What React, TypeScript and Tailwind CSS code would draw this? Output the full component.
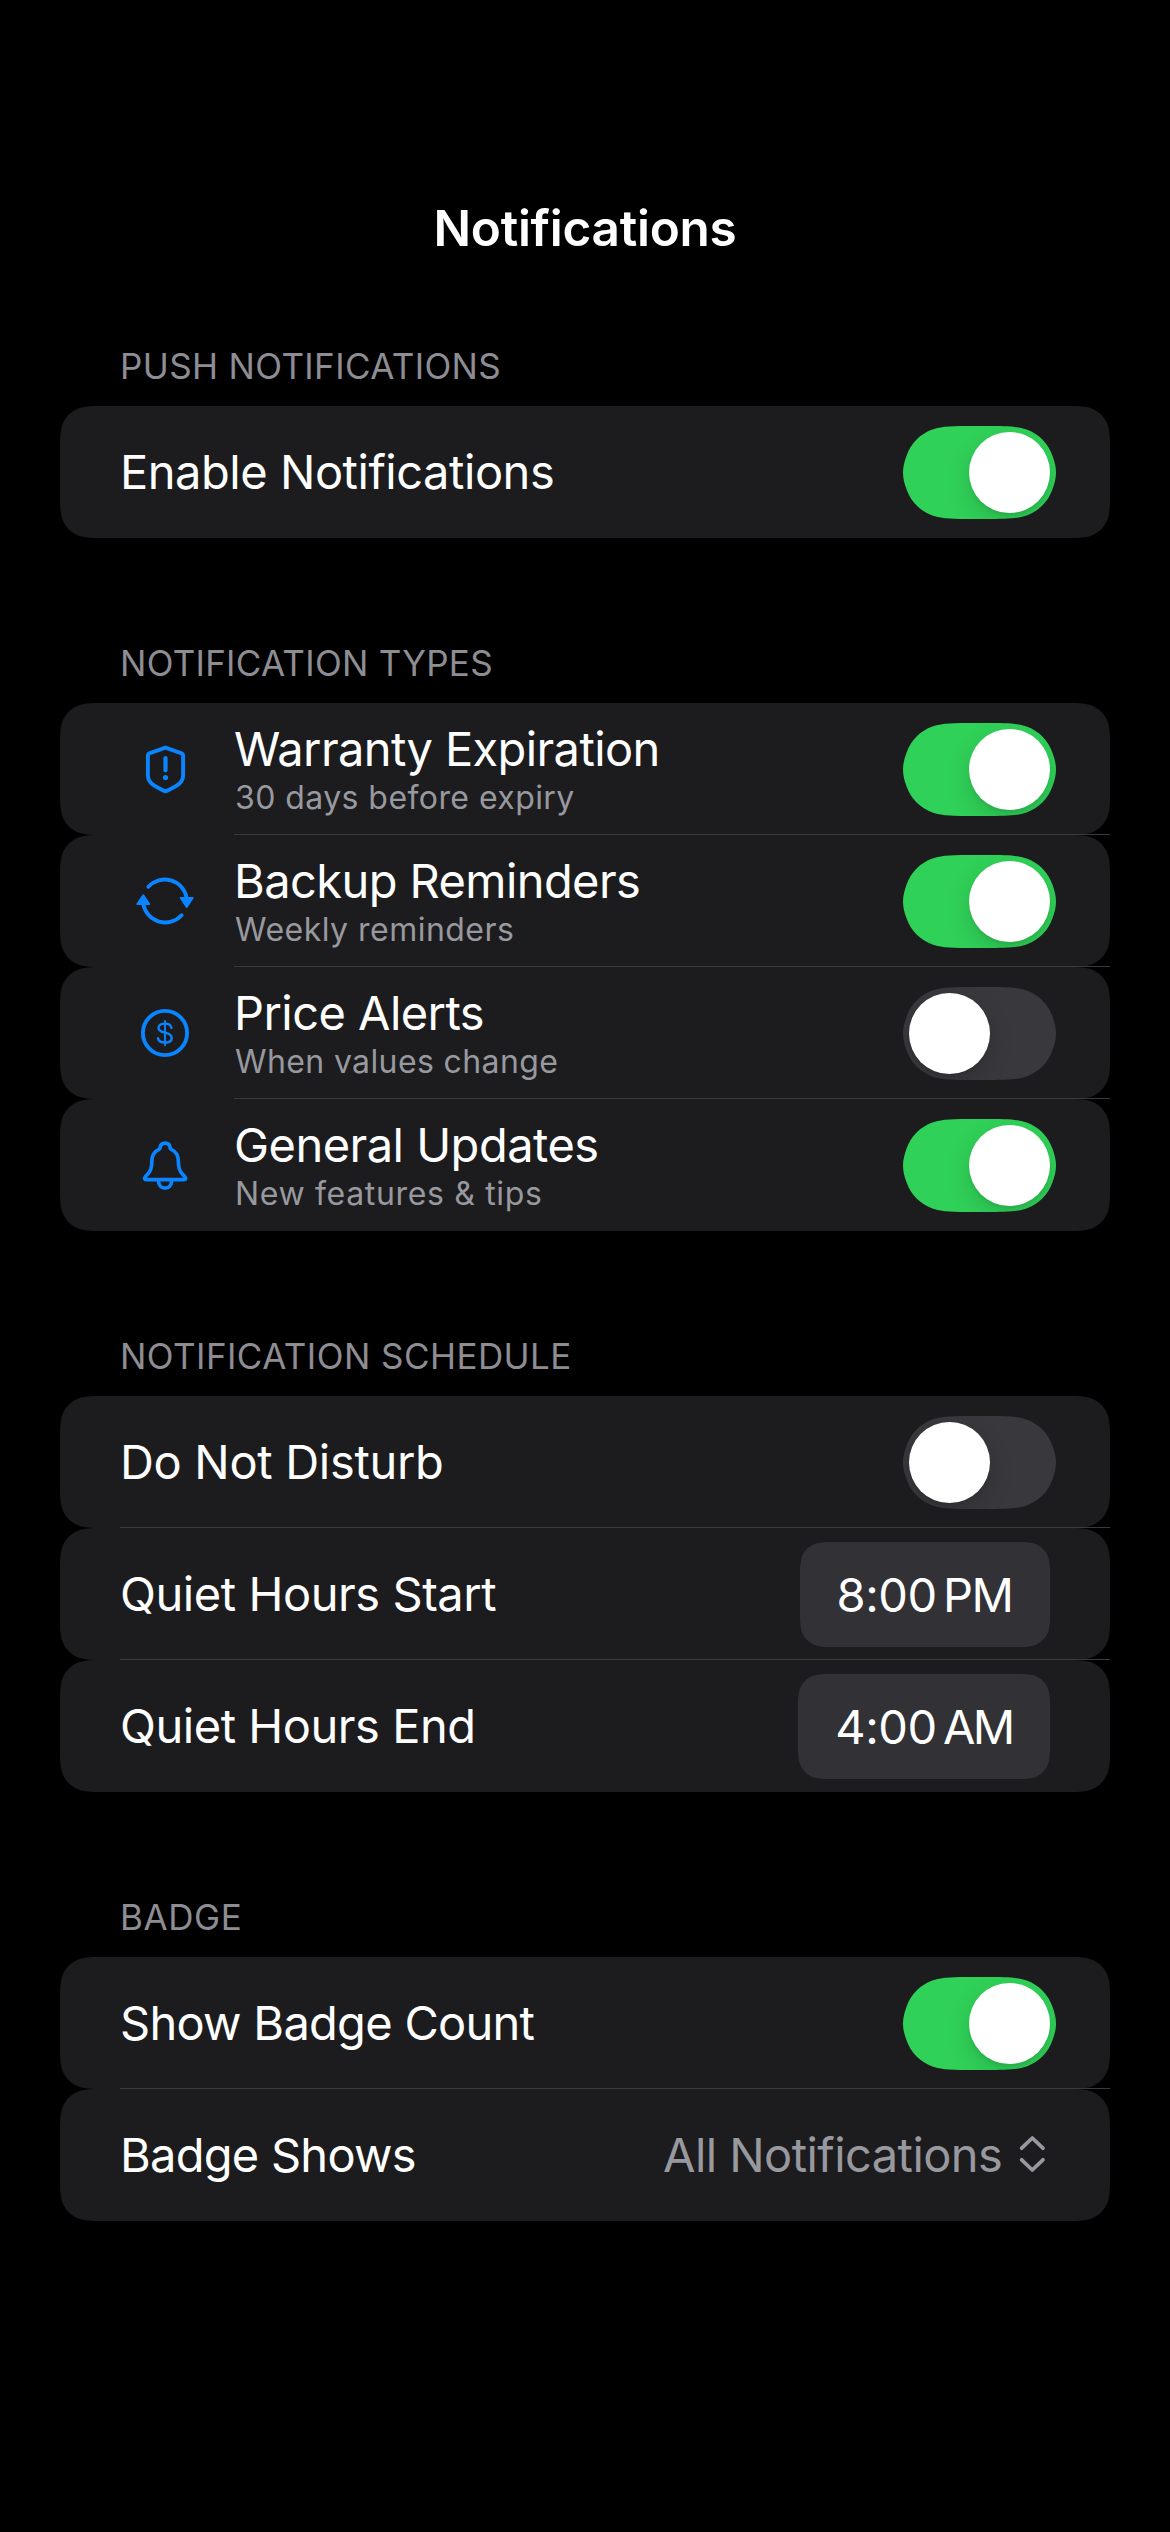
import React, { useState } from 'react';
import type { ReactNode } from 'react';

/** Rounded rectangle with continuous-curvature corners, as a CSS path. */
function smoothRect(w: number, h: number, r: number) {
  const a = 1.528665 * r;
  const b = 1.088493 * r;
  const c = 0.868407 * r;
  const d = 0.631494 * r;
  const e = 0.074911 * r;
  const f = 0.372824 * r;
  const g = 0.169059 * r;
  return (
    `path("M${a} 0 H${w - a} C${w - b} 0 ${w - c} 0 ${w - d} ${e} ` +
    `C${w - f} ${g} ${w - g} ${f} ${w - e} ${d} C${w} ${c} ${w} ${b} ${w} ${a} ` +
    `V${h - a} C${w} ${h - b} ${w} ${h - c} ${w - e} ${h - d} ` +
    `C${w - g} ${h - f} ${w - f} ${h - g} ${w - d} ${h - e} C${w - c} ${h} ${w - b} ${h} ${w - a} ${h} ` +
    `H${a} C${b} ${h} ${c} ${h} ${d} ${h - e} C${f} ${h - g} ${g} ${h - f} ${e} ${h - d} ` +
    `C0 ${h - c} 0 ${h - b} 0 ${h - a} V${a} C0 ${b} 0 ${c} ${e} ${d} ` +
    `C${g} ${f} ${f} ${g} ${d} ${e} C${c} 0 ${b} 0 ${a} 0 Z")`
  );
}

const TRACK =
  'path("M71 0 H82 C102.4 0 112.6 0 123.6 3.5 C135.7 7.9 145 17 149.4 29.4 C151.8 36 153 41 153 46.5 C153 52 151.8 57 149.4 63.6 C145 76 135.7 85.1 123.6 89.5 C112.6 93 102.4 93 82 93 H71 C50.6 93 40.4 93 29.4 89.5 C17.3 85.1 8 76 3.6 63.6 C1.2 57 0 52 0 46.5 C0 41 1.2 36 3.6 29.4 C8 17 17.3 7.9 29.4 3.5 C40.4 0 50.6 0 71 0 Z")';

function Toggle({ label, initial }: { label: string; initial: boolean }) {
  const [on, setOn] = useState(initial);
  return (
    <button
      type="button"
      role="switch"
      aria-checked={on}
      aria-label={label}
      onClick={() => setOn(!on)}
      style={{ clipPath: TRACK }}
      className={
        'mr-[54px] mt-px flex h-[93px] w-[153px] shrink-0 items-center px-1.5 ' +
        (on ? 'justify-end bg-[#30d158]' : 'justify-start bg-[#39393d]')
      }
    >
      <span className="size-[81px] rounded-full bg-white shadow-[0_9px_24px_rgba(0,0,0,0.15),0_3px_3px_rgba(0,0,0,0.06)]" />
    </button>
  );
}

function IconFrame({ children }: { children: ReactNode }) {
  return (
    <svg
      viewBox="0 0 60 60"
      className="ml-[75px] mr-[39px] size-[60px] shrink-0 text-[#0a84ff]"
      fill="none"
      stroke="currentColor"
      strokeWidth="3.9"
      strokeLinecap="round"
      strokeLinejoin="round"
    >
      {children}
    </svg>
  );
}

const ShieldIcon = () => (
  <IconFrame>
    <path d="M30.5 8.6 L14.3 14.3 Q12.9 14.9 12.9 16.4 V36.2 C12.9 41.2 15 43.8 19 46.4 Q22.5 48.8 30.5 52.4 Q38.5 48.8 42 46.4 C46 43.8 48.1 41.2 48.1 36.2 V16.4 Q48.1 14.9 46.7 14.3 Z" />
    <path d="M30.5 19.2 V31.3" strokeWidth="4.2" />
    <circle cx="30.5" cy="38.6" r="2.6" fill="currentColor" stroke="none" />
  </IconFrame>
);

const SyncIcon = () => (
  <IconFrame>
    <path d="M13.4 15.8 A22.2 22.2 0 0 1 51.7 27" />
    <path d="M46.6 44.2 A22.2 22.2 0 0 1 8.3 33" />
    <path d="M45.8 26.9 H57.6 L51.7 35.9 Z" fill="currentColor" strokeWidth="2" />
    <path d="M2.4 33.1 H14.2 L8.3 24.3 Z" fill="currentColor" strokeWidth="2" />
  </IconFrame>
);

const DollarIcon = () => (
  <IconFrame>
    <circle cx="30" cy="30" r="22.1" />
    <path d="M30 17.9 V42.2" strokeWidth="1.9" />
    <path
      d="M36.4 24.8 C36 22 33.5 20.6 30 20.6 C26.2 20.6 23.5 22.3 23.5 24.9 C23.5 27.7 26 28.7 30 29.6 C34.2 30.5 36.7 31.8 36.7 34.9 C36.7 37.9 33.8 39.5 30 39.5 C26 39.5 23.5 38 23 35.2"
      strokeWidth="2.4"
    />
  </IconFrame>
);

const BellIcon = () => (
  <IconFrame>
    <path
      d="M30.1 8.2 C27.2 8.2 25.4 10.2 25.1 12.6 C25 13.8 24.6 14.2 23.7 14.6 C19 16.6 17 20.6 16.9 26 C16.8 32.5 16.2 35.5 13.3 38.6 L10.5 41.6 C9 43.4 9.5 44.7 11.2 44.7 H49 C50.7 44.7 51.2 43.4 49.7 41.6 L46.9 38.6 C44 35.5 43.4 32.5 43.3 26 C43.2 20.6 41.2 16.6 36.5 14.6 C35.6 14.2 35.2 13.8 35.1 12.6 C34.8 10.2 33 8.2 30.1 8.2 Z"
      strokeWidth="3.7"
    />
    <path d="M23.5 45.5 C23.5 50 26.2 53.2 30.1 53.2 C34 53.2 36.7 50 36.7 45.5" strokeWidth="3.7" />
  </IconFrame>
);

function Section({ title, children }: { title: ReactNode; children: ReactNode }) {
  return (
    <section>
      <h2 className="mb-5 pl-[60px] text-[35px] leading-10 text-[#8d8d93]">{title}</h2>
      {children}
    </section>
  );
}

function Row({ children, divider = '' }: { children: ReactNode; divider?: string }) {
  return (
    <div className="relative h-[132px]">
      <div
        className="flex h-[132px] items-center bg-[#1c1c1e]"
        style={{ clipPath: smoothRect(1050, 132, 30) }}
      >
        {children}
      </div>
      {divider && <div className={'absolute right-0 bottom-0 h-px bg-[#3a3a3c] ' + divider} />}
    </div>
  );
}

function Label({ text, tracking }: { text: string; tracking: string }) {
  return <span className={'flex-1 pl-[60px] text-[47px] leading-[56px] ' + tracking}>{text}</span>;
}

function TypeRow(props: {
  icon: ReactNode;
  title: string;
  titleTracking: string;
  note: string;
  noteTracking: string;
  on: boolean;
  last?: boolean;
}) {
  return (
    <Row divider={props.last ? '' : 'left-[174px]'}>
      {props.icon}
      <div className="flex-1">
        <div className={'text-[47px] leading-[56px] ' + props.titleTracking}>{props.title}</div>
        <div className={'mt-px -mb-px pl-px text-[32px] leading-10 text-[#98989f] ' + props.noteTracking}>
          {props.note}
        </div>
      </div>
      <Toggle label={props.title} initial={props.on} />
    </Row>
  );
}

function TimePill({ width, pad, children }: { width: number; pad: string; children: ReactNode }) {
  return (
    <div
      className={'mr-[60px] mt-px flex h-[105px] items-center bg-[#323136] text-[47px] leading-[56px] ' + pad}
      style={{ width, clipPath: smoothRect(width, 105, 24) }}
    >
      {children}
    </div>
  );
}

export default function App() {
  return (
    <main className="min-h-[2532px] w-[1170px] bg-black px-[60px] pt-[198px] font-['Inter',sans-serif] text-white">
      <h1 className="mb-[88px] text-center text-[49.5px] leading-[60px] font-semibold tracking-[-0.27px]">
        Notifications
      </h1>
      <div className="flex flex-col gap-[105px]">
        <Section title={<span className="tracking-[0.37px]">PUSH NOTIFICATIONS</span>}>
          <Row>
            <Label text="Enable Notifications" tracking="tracking-[-0.465px]" />
            <Toggle label="Enable Notifications" initial />
          </Row>
        </Section>

        <Section title={<span className="tracking-[0.27px]">NOTIFICATION TYPES</span>}>
          <TypeRow
            icon={<ShieldIcon />}
            title="Warranty Expiration"
            titleTracking="tracking-[-0.62px]"
            note="30 days before expiry"
            noteTracking="tracking-[0.43px]"
            on
          />
          <TypeRow
            icon={<SyncIcon />}
            title="Backup Reminders"
            titleTracking="tracking-[-0.58px]"
            note="Weekly reminders"
            noteTracking="tracking-[0.48px]"
            on
          />
          <TypeRow
            icon={<DollarIcon />}
            title="Price Alerts"
            titleTracking="tracking-[-0.55px]"
            note="When values change"
            noteTracking="tracking-[0.38px]"
            on={false}
          />
          <TypeRow
            icon={<BellIcon />}
            title="General Updates"
            titleTracking="tracking-[-0.52px]"
            note="New features & tips"
            noteTracking="tracking-[0.66px]"
            on
            last
          />
        </Section>

        <Section title={<span className="tracking-[0.45px]">NOTIFICATION SCHEDULE</span>}>
          <Row divider="left-[60px]">
            <Label text="Do Not Disturb" tracking="tracking-[-0.32px]" />
            <Toggle label="Do Not Disturb" initial={false} />
          </Row>
          <Row divider="left-[60px]">
            <Label text="Quiet Hours Start" tracking="tracking-[-0.44px]" />
            <TimePill width={250} pad="pl-[36.6px] gap-[6.2px]">
              <span className="tracking-[-0.42px]">8:00</span>
              <span className="tracking-[-1.5px]">PM</span>
            </TimePill>
          </Row>
          <Row>
            <Label text="Quiet Hours End" tracking="tracking-[-0.46px]" />
            <TimePill width={252} pad="pl-[37.2px] gap-[6.2px]">
              <span className="tracking-[-0.42px]">4:00</span>
              <span className="tracking-[-2.6px]">AM</span>
            </TimePill>
          </Row>
        </Section>

        <Section title={<span className="tracking-[0.6px]">BADGE</span>}>
          <Row divider="left-[60px]">
            <Label text="Show Badge Count" tracking="tracking-[-0.72px]" />
            <Toggle label="Show Badge Count" initial />
          </Row>
          <Row>
            <Label text="Badge Shows" tracking="tracking-[-0.74px]" />
            <div className="mr-[65px] flex items-center gap-[16.7px] text-[#98989f]">
              <span className="text-[47px] leading-[56px] tracking-[-0.56px]">All Notifications</span>
              <svg
                viewBox="0 0 26 38"
                className="mb-0.5 h-[38px] w-[26px]"
                fill="none"
                stroke="currentColor"
                strokeWidth="3.7"
                strokeLinecap="round"
                strokeLinejoin="round"
              >
                <path d="M2.7 13.2 L13.3 3 L23.9 13.2 M2.7 24.8 L13.3 35 L23.9 24.8" />
              </svg>
            </div>
          </Row>
        </Section>
      </div>
    </main>
  );
}
